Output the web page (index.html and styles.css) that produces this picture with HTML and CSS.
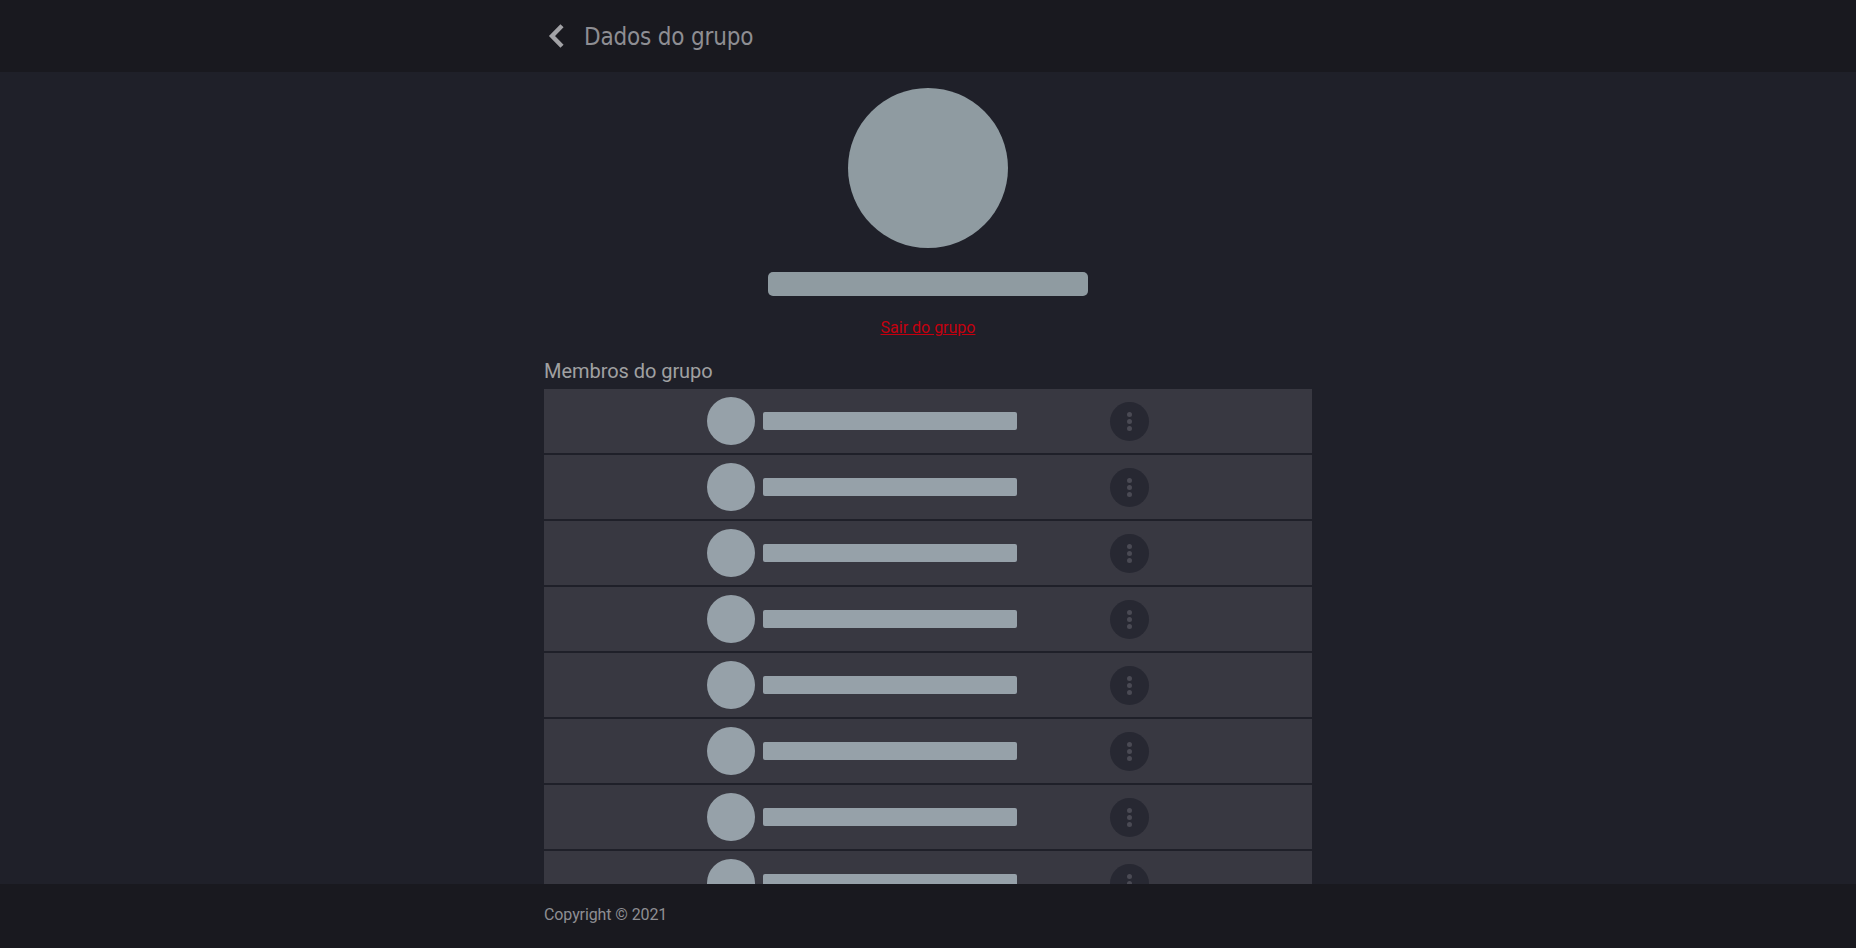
FILE: index.html
```html
<!DOCTYPE html>
<html lang="pt-BR">
<head>
  <meta charset="UTF-8" />
  <meta name="viewport" content="width=device-width, initial-scale=1.0"/>
  <title>Dados do grupo</title>
  <link rel="stylesheet" href="styles.css">
</head>
<body>
  <div class="page">
    <header class="topbar">
      <div class="container topbar-inner">
        <a class="back" href="#" aria-label="Voltar">
          <svg width="24" height="28" viewBox="0 0 24 28"><path d="M18 3.8 L8 14 L18 24.2" fill="none" stroke="#a2a2a6" stroke-width="4.4"/></svg>
        </a>
        <h1 class="title">Dados do grupo</h1>
      </div>
    </header>

    <main class="content">
      <div class="container">
        <section class="group">
          <div class="group-photo"></div>
          <div class="group-name"></div>
          <a class="leave" href="#">Sair do grupo</a>
        </section>

        <h2 class="members-title">Membros do grupo</h2>
        <ul class="members">
          <li class="member"><div class="member-photo"></div><div class="member-name"></div><button class="more"><span></span><span></span><span></span></button></li>
          <li class="member"><div class="member-photo"></div><div class="member-name"></div><button class="more"><span></span><span></span><span></span></button></li>
          <li class="member"><div class="member-photo"></div><div class="member-name"></div><button class="more"><span></span><span></span><span></span></button></li>
          <li class="member"><div class="member-photo"></div><div class="member-name"></div><button class="more"><span></span><span></span><span></span></button></li>
          <li class="member"><div class="member-photo"></div><div class="member-name"></div><button class="more"><span></span><span></span><span></span></button></li>
          <li class="member"><div class="member-photo"></div><div class="member-name"></div><button class="more"><span></span><span></span><span></span></button></li>
          <li class="member"><div class="member-photo"></div><div class="member-name"></div><button class="more"><span></span><span></span><span></span></button></li>
          <li class="member"><div class="member-photo"></div><div class="member-name"></div><button class="more"><span></span><span></span><span></span></button></li>
        </ul>
      </div>
    </main>

    <footer class="footer">
      <div class="container">Copyright © 2021</div>
    </footer>
  </div>
</body>
</html>
```

FILE: styles.css
```css
* {
  box-sizing: border-box;
}

body {
  margin: 0;
  background-color: #1f2029;
  color: #8e8e93;
  font-family: Roboto, sans-serif;
}

.page {
  height: 100vh;
  display: flex;
  flex-direction: column;
  overflow: hidden;
}

.container {
  width: 768px;
  margin: 0 auto;
}

.topbar {
  height: 72px;
  flex-shrink: 0;
  background-color: #19191f;
}

.topbar-inner {
  height: 100%;
  display: flex;
  align-items: center;
}

.back {
  width: 40px;
  height: 28px;
  display: block;
}

.title {
  margin: 2px 0 0;
  font-family: "DejaVu Sans Condensed", "DejaVu Sans", sans-serif;
  font-stretch: condensed;
  font-size: 24px;
  font-weight: 400;
  letter-spacing: -0.18px;
  color: #8e8e93;
}

.content {
  flex: 1;
  min-height: 0;
  overflow: hidden;
}

.group {
  display: flex;
  flex-direction: column;
  align-items: center;
  padding-top: 16px;
}

.group-photo {
  width: 160px;
  height: 160px;
  border-radius: 50%;
  background-color: #8f9ba1;
}

.group-name {
  width: 320px;
  height: 24px;
  margin-top: 24px;
  border-radius: 5px;
  background-color: #8f9ba1;
}

.leave {
  margin-top: 22px;
  font-size: 16px;
  line-height: 19px;
  color: #c4000f;
}

.members-title {
  margin: 23px 0 0;
  font-size: 20px;
  font-weight: 400;
  line-height: 23px;
  letter-spacing: -0.05px;
  color: #a0a0a2;
}

.members {
  list-style: none;
  margin: 6px 0 0;
  padding: 0;
}

.member {
  height: 64px;
  margin-bottom: 2px;
  display: flex;
  align-items: center;
  justify-content: center;
  background-color: #383841;
}

.member-photo {
  width: 48px;
  height: 48px;
  border-radius: 50%;
  background-color: #96a1a9;
}

.member-name {
  width: 254px;
  height: 18px;
  margin-left: 8px;
  border-radius: 2px;
  background-color: #96a1a9;
}

.more {
  width: 39px;
  height: 39px;
  margin-left: 93px;
  padding: 0;
  border: none;
  border-radius: 50%;
  background-color: #272832;
  display: flex;
  flex-direction: column;
  align-items: center;
  justify-content: center;
  gap: 2px;
}

.more span {
  width: 5px;
  height: 5px;
  border-radius: 50%;
  background-color: #4a4a54;
}

.footer {
  height: 64px;
  flex-shrink: 0;
  display: flex;
  align-items: center;
  padding-bottom: 3px;
  background-color: #19191f;
  font-size: 16px;
  letter-spacing: -0.1px;
  color: #8e8e93;
}
```
